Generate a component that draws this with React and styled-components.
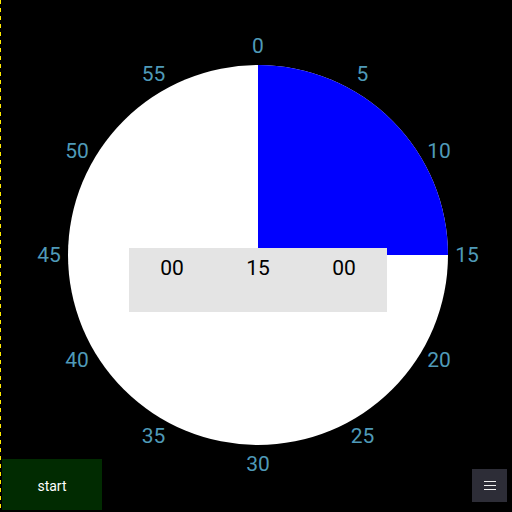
import styled, { createGlobalStyle } from "styled-components";

const GlobalStyle = createGlobalStyle`
  html, body {
    margin: 0;
    padding: 0;
    background: #000;
  }
  body {
    font-family: Roboto, "Noto Sans", sans-serif;
  }
`;

const Screen = styled.div`
  position: relative;
  width: 512px;
  height: 512px;
  box-sizing: border-box;
  padding-left: 1px;
  background:
    repeating-linear-gradient(to bottom, #ffec00 0 4px, transparent 4px 8px)
      left top / 1px 100% no-repeat,
    #000;
  overflow: hidden;
`;

const Dial = styled.svg`
  display: block;
  width: 511px;
  height: 512px;
`;

const Tick = styled.text`
  fill: #4f9ab8;
  font-family: Roboto, sans-serif;
  font-size: 21px;
`;

const Readout = styled.div`
  position: absolute;
  left: 129px;
  top: 248px;
  width: 258px;
  height: 64px;
  box-sizing: border-box;
  padding-top: 8px;
  background: #e4e4e4;
  display: grid;
  grid-template-columns: repeat(3, 1fr);
  align-items: start;
`;

const Field = styled.div`
  text-align: center;
  font-size: 21px;
  line-height: 24px;
  color: #000;
`;

const Controls = styled.div`
  position: absolute;
  left: 2px;
  right: 5px;
  bottom: 2px;
  display: flex;
  justify-content: space-between;
  align-items: flex-end;
`;

const StartButton = styled.button`
  width: 100px;
  height: 51px;
  border: none;
  margin: 0;
  padding: 2px 0 0;
  background: #012b01;
  color: #fff;
  font-family: Roboto, sans-serif;
  font-size: 14px;
`;

const MenuButton = styled.button`
  width: 35px;
  height: 33px;
  margin: 0 0 8px;
  padding: 0;
  border: none;
  background: #2d2d37;
  display: flex;
  flex-direction: column;
  align-items: center;
  justify-content: center;
  gap: 2.5px;
`;

const Bar = styled.span`
  display: block;
  width: 12px;
  height: 1.5px;
  background: #f0f0f0;
`;

const CX = 257;
const CY = 255;
const R = 190;
const LABEL_R = 209;

const ticks = Array.from({ length: 12 }, (_, i) => {
  const a = (i * 30 * Math.PI) / 180;
  return {
    value: i * 5,
    x: CX + LABEL_R * Math.sin(a),
    y: CY - LABEL_R * Math.cos(a),
  };
});

export default function App() {
  return (
    <>
      <GlobalStyle />
      <Screen>
        <Dial viewBox="0 0 511 512">
          <circle cx={CX} cy={CY} r={R} fill="#fff" />
          <path
            d={`M${CX},${CY} L${CX},${CY - R} A${R},${R} 0 0 1 ${CX + R},${CY} Z`}
            fill="#0000ff"
          />
          {ticks.map((t) => (
            <Tick
              key={t.value}
              x={t.x}
              y={t.y}
              textAnchor="middle"
              dominantBaseline="central"
            >
              {t.value}
            </Tick>
          ))}
        </Dial>
        <Readout>
          <Field>00</Field>
          <Field>15</Field>
          <Field>00</Field>
        </Readout>
        <Controls>
          <StartButton>start</StartButton>
          <MenuButton aria-label="menu">
            <Bar />
            <Bar />
            <Bar />
          </MenuButton>
        </Controls>
      </Screen>
    </>
  );
}
